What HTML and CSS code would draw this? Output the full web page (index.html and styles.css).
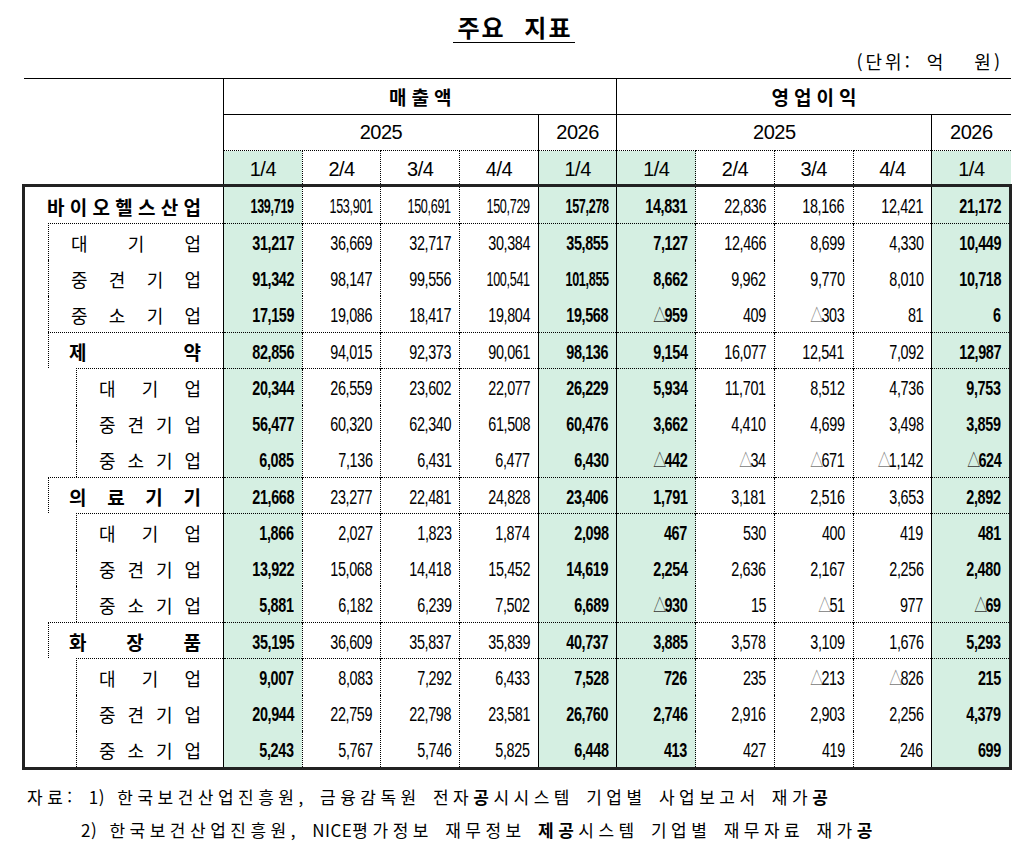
FILE: index.html
```html
<!DOCTYPE html>
<html lang="ko">
<head>
<meta charset="utf-8">
<title>주요 지표</title>
<link rel="stylesheet" href="styles.css">
</head>
<body>
<div class="page">
  <h1 class="title"><span>주요 지표</span></h1>
  <p class="unit">(단위: 억&nbsp; 원)</p>
  <table class="tbl">
    <colgroup>
      <col class="cl"><col class="cd"><col class="cd"><col class="cd"><col class="cd"><col class="cd"><col class="cd"><col class="cd"><col class="cd"><col class="cd"><col class="cd">
    </colgroup>
    <thead>
      <tr class="h1">
        <th class="hl" rowspan="3"></th>
        <th class="hg" colspan="5">매출액</th>
        <th class="hg" colspan="5">영업이익</th>
      </tr>
      <tr class="h2">
        <th class="y" colspan="4">2025</th>
        <th class="y">2026</th>
        <th class="y" colspan="4">2025</th>
        <th class="y">2026</th>
      </tr>
      <tr class="h3">
        <th class="c1 g">1/4</th><th class="c2">2/4</th><th class="c3">3/4</th><th class="c4">4/4</th><th class="c5 g">1/4</th>
        <th class="c6 g">1/4</th><th class="c7">2/4</th><th class="c8">3/4</th><th class="c9">4/4</th><th class="c10 g">1/4</th>
      </tr>
    </thead>
    <tbody>
      <tr>
        <td class="lab"><div class="li lb0 bold"><span>바</span><span>이</span><span>오</span><span>헬</span><span>스</span><span>산</span><span>업</span></div></td>
        <td class="c1 g"><span class="v w">139,719</span></td><td class="c2"><span class="v w">153,901</span></td><td class="c3"><span class="v w">150,691</span></td><td class="c4"><span class="v w">150,729</span></td><td class="c5 g"><span class="v w">157,278</span></td>
        <td class="c6 g"><span class="v">14,831</span></td><td class="c7"><span class="v">22,836</span></td><td class="c8"><span class="v">18,166</span></td><td class="c9"><span class="v">12,421</span></td><td class="c10 g"><span class="v">21,172</span></td>
      </tr>
      <tr class="gt">
        <td class="lab"><div class="li lb1 top"><span>대</span><span>기</span><span>업</span></div></td>
        <td class="c1 g"><span class="v">31,217</span></td><td class="c2"><span class="v">36,669</span></td><td class="c3"><span class="v">32,717</span></td><td class="c4"><span class="v">30,384</span></td><td class="c5 g"><span class="v">35,855</span></td>
        <td class="c6 g"><span class="v">7,127</span></td><td class="c7"><span class="v">12,466</span></td><td class="c8"><span class="v">8,699</span></td><td class="c9"><span class="v">4,330</span></td><td class="c10 g"><span class="v">10,449</span></td>
      </tr>
      <tr>
        <td class="lab"><div class="li lb1"><span>중</span><span>견</span><span>기</span><span>업</span></div></td>
        <td class="c1 g"><span class="v">91,342</span></td><td class="c2"><span class="v">98,147</span></td><td class="c3"><span class="v">99,556</span></td><td class="c4"><span class="v w">100,541</span></td><td class="c5 g"><span class="v w">101,855</span></td>
        <td class="c6 g"><span class="v">8,662</span></td><td class="c7"><span class="v">9,962</span></td><td class="c8"><span class="v">9,770</span></td><td class="c9"><span class="v">8,010</span></td><td class="c10 g"><span class="v">10,718</span></td>
      </tr>
      <tr>
        <td class="lab"><div class="li lb1"><span>중</span><span>소</span><span>기</span><span>업</span></div></td>
        <td class="c1 g"><span class="v">17,159</span></td><td class="c2"><span class="v">19,086</span></td><td class="c3"><span class="v">18,417</span></td><td class="c4"><span class="v">19,804</span></td><td class="c5 g"><span class="v">19,568</span></td>
        <td class="c6 g"><span class="v"><span class="t">△</span>959</span></td><td class="c7"><span class="v">409</span></td><td class="c8"><span class="v"><span class="t">△</span>303</span></td><td class="c9"><span class="v">81</span></td><td class="c10 g"><span class="v">6</span></td>
      </tr>
      <tr class="gt">
        <td class="lab"><div class="li lb1 grp top bold"><span>제</span><span>약</span></div></td>
        <td class="c1 g"><span class="v">82,856</span></td><td class="c2"><span class="v">94,015</span></td><td class="c3"><span class="v">92,373</span></td><td class="c4"><span class="v">90,061</span></td><td class="c5 g"><span class="v">98,136</span></td>
        <td class="c6 g"><span class="v">9,154</span></td><td class="c7"><span class="v">16,077</span></td><td class="c8"><span class="v">12,541</span></td><td class="c9"><span class="v">7,092</span></td><td class="c10 g"><span class="v">12,987</span></td>
      </tr>
      <tr class="gt">
        <td class="lab"><div class="li lb2 top"><span>대</span><span>기</span><span>업</span></div></td>
        <td class="c1 g"><span class="v">20,344</span></td><td class="c2"><span class="v">26,559</span></td><td class="c3"><span class="v">23,602</span></td><td class="c4"><span class="v">22,077</span></td><td class="c5 g"><span class="v">26,229</span></td>
        <td class="c6 g"><span class="v">5,934</span></td><td class="c7"><span class="v">11,701</span></td><td class="c8"><span class="v">8,512</span></td><td class="c9"><span class="v">4,736</span></td><td class="c10 g"><span class="v">9,753</span></td>
      </tr>
      <tr>
        <td class="lab"><div class="li lb2"><span>중</span><span>견</span><span>기</span><span>업</span></div></td>
        <td class="c1 g"><span class="v">56,477</span></td><td class="c2"><span class="v">60,320</span></td><td class="c3"><span class="v">62,340</span></td><td class="c4"><span class="v">61,508</span></td><td class="c5 g"><span class="v">60,476</span></td>
        <td class="c6 g"><span class="v">3,662</span></td><td class="c7"><span class="v">4,410</span></td><td class="c8"><span class="v">4,699</span></td><td class="c9"><span class="v">3,498</span></td><td class="c10 g"><span class="v">3,859</span></td>
      </tr>
      <tr>
        <td class="lab"><div class="li lb2"><span>중</span><span>소</span><span>기</span><span>업</span></div></td>
        <td class="c1 g"><span class="v">6,085</span></td><td class="c2"><span class="v">7,136</span></td><td class="c3"><span class="v">6,431</span></td><td class="c4"><span class="v">6,477</span></td><td class="c5 g"><span class="v">6,430</span></td>
        <td class="c6 g"><span class="v"><span class="t">△</span>442</span></td><td class="c7"><span class="v"><span class="t">△</span>34</span></td><td class="c8"><span class="v"><span class="t">△</span>671</span></td><td class="c9"><span class="v"><span class="t">△</span>1,142</span></td><td class="c10 g"><span class="v"><span class="t">△</span>624</span></td>
      </tr>
      <tr class="gt">
        <td class="lab"><div class="li lb1 grp top bold"><span>의</span><span>료</span><span>기</span><span>기</span></div></td>
        <td class="c1 g"><span class="v">21,668</span></td><td class="c2"><span class="v">23,277</span></td><td class="c3"><span class="v">22,481</span></td><td class="c4"><span class="v">24,828</span></td><td class="c5 g"><span class="v">23,406</span></td>
        <td class="c6 g"><span class="v">1,791</span></td><td class="c7"><span class="v">3,181</span></td><td class="c8"><span class="v">2,516</span></td><td class="c9"><span class="v">3,653</span></td><td class="c10 g"><span class="v">2,892</span></td>
      </tr>
      <tr class="gt">
        <td class="lab"><div class="li lb2 top"><span>대</span><span>기</span><span>업</span></div></td>
        <td class="c1 g"><span class="v">1,866</span></td><td class="c2"><span class="v">2,027</span></td><td class="c3"><span class="v">1,823</span></td><td class="c4"><span class="v">1,874</span></td><td class="c5 g"><span class="v">2,098</span></td>
        <td class="c6 g"><span class="v">467</span></td><td class="c7"><span class="v">530</span></td><td class="c8"><span class="v">400</span></td><td class="c9"><span class="v">419</span></td><td class="c10 g"><span class="v">481</span></td>
      </tr>
      <tr>
        <td class="lab"><div class="li lb2"><span>중</span><span>견</span><span>기</span><span>업</span></div></td>
        <td class="c1 g"><span class="v">13,922</span></td><td class="c2"><span class="v">15,068</span></td><td class="c3"><span class="v">14,418</span></td><td class="c4"><span class="v">15,452</span></td><td class="c5 g"><span class="v">14,619</span></td>
        <td class="c6 g"><span class="v">2,254</span></td><td class="c7"><span class="v">2,636</span></td><td class="c8"><span class="v">2,167</span></td><td class="c9"><span class="v">2,256</span></td><td class="c10 g"><span class="v">2,480</span></td>
      </tr>
      <tr>
        <td class="lab"><div class="li lb2"><span>중</span><span>소</span><span>기</span><span>업</span></div></td>
        <td class="c1 g"><span class="v">5,881</span></td><td class="c2"><span class="v">6,182</span></td><td class="c3"><span class="v">6,239</span></td><td class="c4"><span class="v">7,502</span></td><td class="c5 g"><span class="v">6,689</span></td>
        <td class="c6 g"><span class="v"><span class="t">△</span>930</span></td><td class="c7"><span class="v">15</span></td><td class="c8"><span class="v"><span class="t">△</span>51</span></td><td class="c9"><span class="v">977</span></td><td class="c10 g"><span class="v"><span class="t">△</span>69</span></td>
      </tr>
      <tr class="gt">
        <td class="lab"><div class="li lb1 grp top bold"><span>화</span><span>장</span><span>품</span></div></td>
        <td class="c1 g"><span class="v">35,195</span></td><td class="c2"><span class="v">36,609</span></td><td class="c3"><span class="v">35,837</span></td><td class="c4"><span class="v">35,839</span></td><td class="c5 g"><span class="v">40,737</span></td>
        <td class="c6 g"><span class="v">3,885</span></td><td class="c7"><span class="v">3,578</span></td><td class="c8"><span class="v">3,109</span></td><td class="c9"><span class="v">1,676</span></td><td class="c10 g"><span class="v">5,293</span></td>
      </tr>
      <tr class="gt">
        <td class="lab"><div class="li lb2 top"><span>대</span><span>기</span><span>업</span></div></td>
        <td class="c1 g"><span class="v">9,007</span></td><td class="c2"><span class="v">8,083</span></td><td class="c3"><span class="v">7,292</span></td><td class="c4"><span class="v">6,433</span></td><td class="c5 g"><span class="v">7,528</span></td>
        <td class="c6 g"><span class="v">726</span></td><td class="c7"><span class="v">235</span></td><td class="c8"><span class="v"><span class="t">△</span>213</span></td><td class="c9"><span class="v"><span class="t">△</span>826</span></td><td class="c10 g"><span class="v">215</span></td>
      </tr>
      <tr>
        <td class="lab"><div class="li lb2"><span>중</span><span>견</span><span>기</span><span>업</span></div></td>
        <td class="c1 g"><span class="v">20,944</span></td><td class="c2"><span class="v">22,759</span></td><td class="c3"><span class="v">22,798</span></td><td class="c4"><span class="v">23,581</span></td><td class="c5 g"><span class="v">26,760</span></td>
        <td class="c6 g"><span class="v">2,746</span></td><td class="c7"><span class="v">2,916</span></td><td class="c8"><span class="v">2,903</span></td><td class="c9"><span class="v">2,256</span></td><td class="c10 g"><span class="v">4,379</span></td>
      </tr>
      <tr>
        <td class="lab"><div class="li lb2"><span>중</span><span>소</span><span>기</span><span>업</span></div></td>
        <td class="c1 g"><span class="v">5,243</span></td><td class="c2"><span class="v">5,767</span></td><td class="c3"><span class="v">5,746</span></td><td class="c4"><span class="v">5,825</span></td><td class="c5 g"><span class="v">6,448</span></td>
        <td class="c6 g"><span class="v">413</span></td><td class="c7"><span class="v">427</span></td><td class="c8"><span class="v">419</span></td><td class="c9"><span class="v">246</span></td><td class="c10 g"><span class="v">699</span></td>
      </tr>
    </tbody>
  </table>
  <div class="src">
    <p class="s1">자료: <span class="lat">1)</span> 한국보건산업진흥원, 금융감독원 전자<b>공</b>시시스템 기업별 사업보고서 재가<b>공</b></p>
    <p class="s2"><span class="lat">2)</span> 한국보건산업진흥원, <span class="lat">NICE</span>평가정보 재무정보 <b>제공</b>시스템 기업별 재무자료 재가<b>공</b></p>
  </div>
</div>
</body>
</html>
```

FILE: styles.css
```css
html, body {
  margin: 0;
  padding: 0;
  background: #ffffff;
}

body {
  font-family: "Noto Sans CJK KR", "Liberation Sans", sans-serif;
  color: #000;
}

.page {
  width: 1028px;
}

.title {
  margin: 0;
  padding-top: 12px;
  text-align: center;
  font-size: 24px;
  font-weight: 700;
  line-height: 30px;
  height: 32px;
}

.title span {
  display: inline-block;
  border-bottom: 1.5px solid #000;
  padding: 0 2px 0 4px;
  letter-spacing: 2px;
  word-spacing: 10px;
  line-height: 30px;
}

.unit {
  margin: 5px 0 0 0;
  text-align: right;
  padding-right: 25px;
  font-size: 18px;
  line-height: 24px;
  letter-spacing: 3px;
  word-spacing: 6px;
}

.tbl {
  margin: 5px 0 0 22px;
  border-collapse: collapse;
  table-layout: fixed;
  width: 990px;
}

.cl { width: 200px; }
.cd { width: 78.7px; }

.tbl th,
.tbl td {
  padding: 0;
}

/* header */
.tbl thead th {
  font-weight: 400;
  text-align: center;
  vertical-align: middle;
}

.h1 { height: 36px; }
.h2 { height: 36px; }
.h3 { height: 35px; }

.hl {
  border-top: 1px solid #000;
}

.hg {
  border-top: 1px solid #000;
  border-left: 1px solid #000;
  border-bottom: 1px solid #000;
  font-family: "Noto Sans CJK KR", sans-serif;
  font-size: 19px;
  font-weight: 700 !important;
  letter-spacing: 5px;
  padding-left: 5px !important;
}

.y {
  border-left: 1px solid #000;
  border-bottom: 1px dotted #000;
  font-family: "Liberation Sans", sans-serif;
  font-size: 20px;
  letter-spacing: -0.5px;
}

.h3 th {
  font-family: "Liberation Sans", sans-serif;
  font-size: 20px;
  padding-top: 3px;
  letter-spacing: -0.5px;
}

/* column borders */
.c1, .c5, .c6, .c10 { border-left: 1px solid #000; }
.c2, .c3, .c4, .c7, .c8, .c9 { border-left: 1px dotted #000; }

.g {
  background: #d5efe2;
}

/* body */
.tbl tbody {
  border: 3px solid #222;
}

.tbl tbody tr {
  height: 36.25px;
}

.tbl tbody td {
  vertical-align: middle;
}

.lab {
  border-right: 1px solid #000;
}

.li {
  box-sizing: border-box;
  height: 36.25px;
  display: flex;
  align-items: center;
  justify-content: space-between;
  padding: 2px 22px 0 22px;
  font-size: 18px;
  line-height: 1;
}

.li.bold { font-weight: 700; font-size: 19px; }

.lb0 { margin-left: 0; }
.lb1 { margin-left: 23px; border-left: 1px dotted #000; }
.lb2 { margin-left: 51px; border-left: 1px dotted #000; }
.li.grp { padding-left: 20px; }
.li.top { border-top: 1px dotted #000; }

.gt td:not(.lab) {
  border-top: 1px dotted #000;
}

.tbl tbody td:not(.lab) {
  text-align: right;
  padding-right: 8px;
  padding-top: 3px;
  font-family: "Liberation Sans", sans-serif;
  font-size: 20px;
  line-height: 1;
  white-space: nowrap;
}

.tbl tbody td.g {
  font-weight: 700;
}

.v {
  display: inline-block;
  transform: scaleX(0.72);
  transform-origin: 100% 50%;
  letter-spacing: -0.5px;
}

.v.w {
  transform: scaleX(0.63);
}

.t {
  font-family: "Noto Sans CJK KR", sans-serif;
  font-weight: 400;
  font-size: 18px;
  color: #777;
  margin-right: -2px;
}

.g .t {
  color: #333;
}

/* source notes */
.src {
  margin-top: 10px;
  font-size: 17px;
  letter-spacing: 4.5px;
  word-spacing: 3px;
}

.src p {
  margin: 0;
  line-height: 33px;
  white-space: nowrap;
}

.src .lat {
  letter-spacing: 0.5px;
}

.s1 { padding-left: 27px; }
.s2 { padding-left: 81px; }

.src b { font-weight: 700; }
```
